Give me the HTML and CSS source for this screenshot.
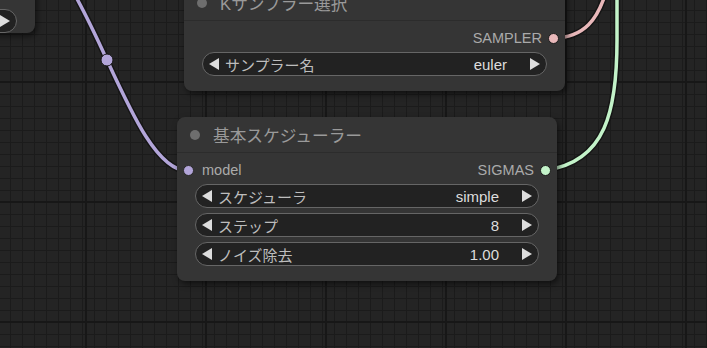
FILE: index.html
```html
<!DOCTYPE html>
<html lang="ja">
<head>
<meta charset="utf-8">
<title>Node graph</title>
<link rel="stylesheet" href="styles.css">
</head>
<body>
<div class="canvas">
  <svg class="links" width="707" height="348" viewBox="0 0 707 348">
    <g fill="none" stroke-linecap="round">
      <path class="link-outline" d="M26,-51 C86,-51 128,171 188,171"/>
      <path class="link-core purple" d="M26,-51 C86,-51 128,171 188,171"/>
      <path class="link-outline" d="M553,38 C585,38 598,18 606,-8"/>
      <path class="link-core pink" d="M553,38 C585,38 598,18 606,-8"/>
      <path class="link-outline" d="M546,170 C606,162 617,110 617,40 L617,-10"/>
      <path class="link-core green" d="M546,170 C606,162 617,110 617,40 L617,-10"/>
    </g>
    <circle class="link-marker" cx="107" cy="60" r="6"/>
  </svg>

  <div class="node node-partial">
    <div class="node-fill"></div>
    <div class="widget widget-partial">
      <span class="w-label"></span>
      <svg class="arrow" width="10" height="12" viewBox="0 0 10 12"><polygon points="0,0 10,6 0,12"/></svg>
    </div>
  </div>

  <div class="node node-sampler">
    <div class="title">
      <span class="title-dot"></span>
      <span class="title-text">Kサンプラー選択</span>
    </div>
    <div class="body">
      <div class="slot-row">
        <span class="slot-spacer"></span>
        <span class="slot slot-out"><span class="slot-label">SAMPLER</span><span class="dot dot-pink"></span></span>
      </div>
      <div class="widget">
        <svg class="arrow" width="10" height="12" viewBox="0 0 10 12"><polygon points="10,0 0,6 10,12"/></svg>
        <span class="w-label">サンプラー名</span>
        <span class="w-value">euler</span>
        <svg class="arrow arrow-right" width="10" height="12" viewBox="0 0 10 12"><polygon points="0,0 10,6 0,12"/></svg>
      </div>
    </div>
  </div>

  <div class="node node-scheduler">
    <div class="title">
      <span class="title-dot"></span>
      <span class="title-text">基本スケジューラー</span>
    </div>
    <div class="body">
      <div class="slot-row">
        <span class="slot slot-in"><span class="dot dot-purple"></span><span class="slot-label">model</span></span>
        <span class="slot slot-out"><span class="slot-label">SIGMAS</span><span class="dot dot-green"></span></span>
      </div>
      <div class="widget">
        <svg class="arrow" width="10" height="12" viewBox="0 0 10 12"><polygon points="10,0 0,6 10,12"/></svg>
        <span class="w-label">スケジューラ</span>
        <span class="w-value">simple</span>
        <svg class="arrow arrow-right" width="10" height="12" viewBox="0 0 10 12"><polygon points="0,0 10,6 0,12"/></svg>
      </div>
      <div class="widget widget-next">
        <svg class="arrow" width="10" height="12" viewBox="0 0 10 12"><polygon points="10,0 0,6 10,12"/></svg>
        <span class="w-label">ステップ</span>
        <span class="w-value">8</span>
        <svg class="arrow arrow-right" width="10" height="12" viewBox="0 0 10 12"><polygon points="0,0 10,6 0,12"/></svg>
      </div>
      <div class="widget widget-next">
        <svg class="arrow" width="10" height="12" viewBox="0 0 10 12"><polygon points="10,0 0,6 10,12"/></svg>
        <span class="w-label">ノイズ除去</span>
        <span class="w-value">1.00</span>
        <svg class="arrow arrow-right" width="10" height="12" viewBox="0 0 10 12"><polygon points="0,0 10,6 0,12"/></svg>
      </div>
    </div>
  </div>
</div>
</body>
</html>
```

FILE: styles.css
```css
html, body {
  margin: 0;
  padding: 0;
  background: #222;
}

.canvas {
  position: relative;
  width: 707px;
  height: 348px;
  overflow: hidden;
  background-color: #242424;
  background-image:
    linear-gradient(90deg, #171717 0 2px, transparent 2px),
    linear-gradient(180deg, #171717 0 2px, transparent 2px),
    linear-gradient(90deg, #1b1b1b 0 1px, transparent 1px),
    linear-gradient(180deg, #1b1b1b 0 1px, transparent 1px);
  background-size: 120px 120px, 120px 120px, 12px 12px, 12px 12px;
  background-position: 85px 0, 0 81px, 10px 0, 0 10px;
  font-family: "Liberation Sans", "Noto Sans CJK JP", sans-serif;
}

.links {
  position: absolute;
  left: 0;
  top: 0;
}

.link-outline {
  stroke: #151515;
  stroke-width: 6.5;
}

.link-core {
  stroke-width: 3.5;
}

.purple { stroke: #b2a5d9; }
.pink { stroke: #e9b8ba; }
.green { stroke: #c3f3c9; }

.link-marker {
  fill: #b2a5d9;
  stroke: #151515;
  stroke-width: 1;
}

.node {
  position: absolute;
  background: #353535;
  border-radius: 8px;
  box-shadow: 2px 3px 6px rgba(0, 0, 0, 0.55);
  display: flex;
  flex-direction: column;
}

.node-partial {
  left: -200px;
  top: -120px;
  width: 235px;
  height: 153px;
  justify-content: flex-end;
}

.node-partial .node-fill {
  flex: 1;
}

.widget-partial {
  margin-bottom: 15px;
}

.node-sampler {
  left: 184px;
  top: -15px;
  width: 381px;
  height: 106px;
}

.node-scheduler {
  left: 177px;
  top: 117px;
  width: 380px;
  height: 164px;
}

.title {
  height: 35px;
  border-bottom: 1px solid #2c2c2c;
  display: flex;
  align-items: center;
  padding-left: 13px;
}

.title-dot {
  width: 10px;
  height: 10px;
  border-radius: 50%;
  background: #6e6e6e;
  flex: none;
}

.title-text {
  margin-left: 13px;
  font-size: 16.7px;
  color: #9a9a9a;
  white-space: nowrap;
}

.body {
  display: flex;
  flex-direction: column;
}

.slot-row {
  margin-top: 5px;
  height: 24px;
  display: flex;
  align-items: center;
  justify-content: space-between;
  padding: 0 6px;
}

.slot {
  display: flex;
  align-items: center;
  font-size: 14.5px;
  color: #aaa;
}

.slot-in .slot-label {
  margin-left: 8px;
}

.slot-out .slot-label {
  margin-right: 6px;
}

.dot {
  width: 11px;
  height: 11px;
  border-radius: 50%;
  box-sizing: border-box;
  border: 1px solid #1c1c1c;
}

.dot-purple { background: #b2a5d9; border-color: #2a2a2a; }
.dot-pink { background: #e9b8ba; }
.dot-green { background: #c3f3c9; }

.widget {
  margin: 2px 18px 0;
  height: 24px;
  box-sizing: border-box;
  border: 1px solid #666;
  border-radius: 12px;
  background: #222;
  display: flex;
  align-items: center;
  padding: 0 6px;
  font-size: 15px;
}

.widget-next {
  margin-top: 5px;
}

.arrow {
  flex: none;
  fill: #ddd;
}

.arrow-right {
  margin-left: 23px;
}

.w-label {
  flex: 1;
  margin-left: 6px;
  color: #bdbdbd;
  white-space: nowrap;
}

.w-value {
  color: #ddd;
  white-space: nowrap;
}
```
